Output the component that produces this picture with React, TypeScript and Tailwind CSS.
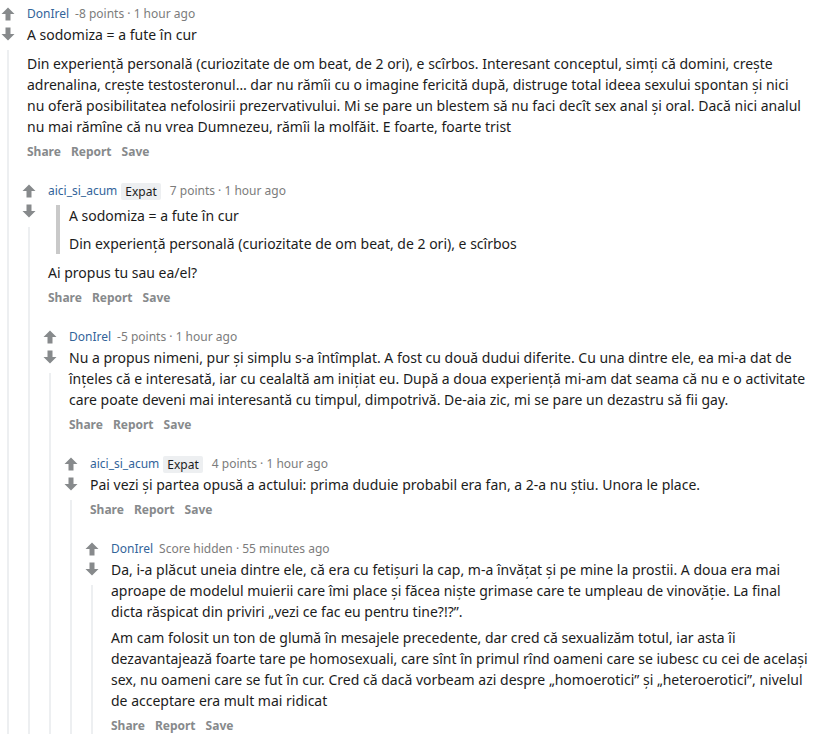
import React from "react";

type C = {
  user: string;
  flair?: string;
  meta: string;
  body: React.ReactNode;
  child?: C;
};

function Arrow({ down }: { down?: boolean }) {
  return (
    <svg width="14" height="14" viewBox="0 0 14 14" className={down ? "rotate-180" : ""}>
      <path d="M7 0.5 L13.5 7 H9.5 V13.5 H4.5 V7 H0.5 Z" fill="#878a8c" />
    </svg>
  );
}

function Comment({ c }: { c: C }) {
  return (
    <div className="flex pt-[4px]">
      <div className="w-[15px] shrink-0 flex flex-col items-center">
        <div className="h-[20px] flex items-center">
          <Arrow />
        </div>
        <div className="h-[20px] flex items-center">
          <Arrow down />
        </div>
        <div className="mt-[6px] w-[2px] flex-1 bg-[#edeff1]" />
      </div>
      <div className="flex-1 min-w-0">
        <div className="pl-[12px]">
          <div className="h-[20px] flex items-center text-[12px] leading-[20px]">
            <span className="text-[#33649a]">{c.user}</span>
            {c.flair && (
              <span className="ml-[4px] bg-[#edeff1] text-[#1c1c1c] px-[4px] leading-[17px] rounded-[2px]">
                {c.flair}
              </span>
            )}
            <span className={(c.flair ? "ml-[9px]" : "ml-[6px]") + " text-[#7c7c7c]"}>{c.meta}</span>
          </div>
          <div className="text-[14px] leading-[21px] text-[#1c1c1c]">{c.body}</div>
          <div className="mt-[3px] h-[24px] flex items-center gap-[10px] text-[12px] font-bold text-[#878a8c]">
            <span>Share</span>
            <span>Report</span>
            <span>Save</span>
          </div>
        </div>
        {c.child && (
          <div className="ml-[6px] mt-[13px]">
            <Comment c={c.child} />
          </div>
        )}
      </div>
    </div>
  );
}

const data: C = {
  user: "DonIrel",
  meta: "-8 points · 1 hour ago",
  body: (
    <>
      <p>A sodomiza = a fute în cur</p>
      <p className="mt-[8px]">
        Din experiență personală (curiozitate de om beat, de 2 ori), e scîrbos. Interesant conceptul, simți că domini,
        crește adrenalina, crește testosteronul… dar nu rămîi cu o imagine fericită după, distruge total ideea sexului
        spontan și nici nu oferă posibilitatea nefolosirii prezervativului. Mi se pare un blestem să nu faci decît sex anal
        și oral. Dacă nici analul nu mai rămîne că nu vrea Dumnezeu, rămîi la molfăit. E foarte, foarte trist
      </p>
    </>
  ),
  child: {
    user: "aici_si_acum",
    flair: "Expat",
    meta: "7 points · 1 hour ago",
    body: (
      <>
        <blockquote className="mt-[4px] ml-[8px] border-l-[4px] border-[#c9c9c9] pl-[9px]">
          <p>A sodomiza = a fute în cur</p>
          <p className="mt-[7px]">Din experiență personală (curiozitate de om beat, de 2 ori), e scîrbos</p>
        </blockquote>
        <p className="mt-[8px]">Ai propus tu sau ea/el?</p>
      </>
    ),
    child: {
      user: "DonIrel",
      meta: "-5 points · 1 hour ago",
      body: (
        <p>
          Nu a propus nimeni, pur și simplu s-a întîmplat. A fost cu două dudui diferite. Cu una dintre ele, ea mi-a dat de
          înțeles că e interesată, iar cu cealaltă am inițiat eu. După a doua experiență mi-am dat seama că nu e o
          activitate care poate deveni mai interesantă cu timpul, dimpotrivă. De-aia zic, mi se pare un dezastru să fii
          gay.
        </p>
      ),
      child: {
        user: "aici_si_acum",
        flair: "Expat",
        meta: "4 points · 1 hour ago",
        body: <p>Pai vezi și partea opusă a actului: prima duduie probabil era fan, a 2-a nu știu. Unora le place.</p>,
        child: {
          user: "DonIrel",
          meta: "Score hidden · 55 minutes ago",
          body: (
            <>
              <p>
                Da, i-a plăcut uneia dintre ele, că era cu fetișuri la cap, m-a învățat și pe mine la prostii. A doua era
                mai aproape de modelul muierii care îmi place și făcea niște grimase care te umpleau de vinovăție. La final
                dicta răspicat din priviri „vezi ce fac eu pentru tine?!?”.
              </p>
              <p className="mt-[5px]">
                Am cam folosit un ton de glumă în mesajele precedente, dar cred că sexualizăm totul, iar asta îi
                dezavantajează foarte tare pe homosexuali, care sînt în primul rînd oameni care se iubesc cu cei de același
                sex, nu oameni care se fut în cur. Cred că dacă vorbeam azi despre „homoerotici” și „heteroerotici”,
                nivelul de acceptare era mult mai ridicat
              </p>
            </>
          ),
        },
      },
    },
  },
};

export default function App() {
  return (
    <div className="w-[815px] h-[734px] overflow-hidden bg-white pr-[6px] font-['Noto_Sans',sans-serif]">
      <Comment c={data} />
    </div>
  );
}
